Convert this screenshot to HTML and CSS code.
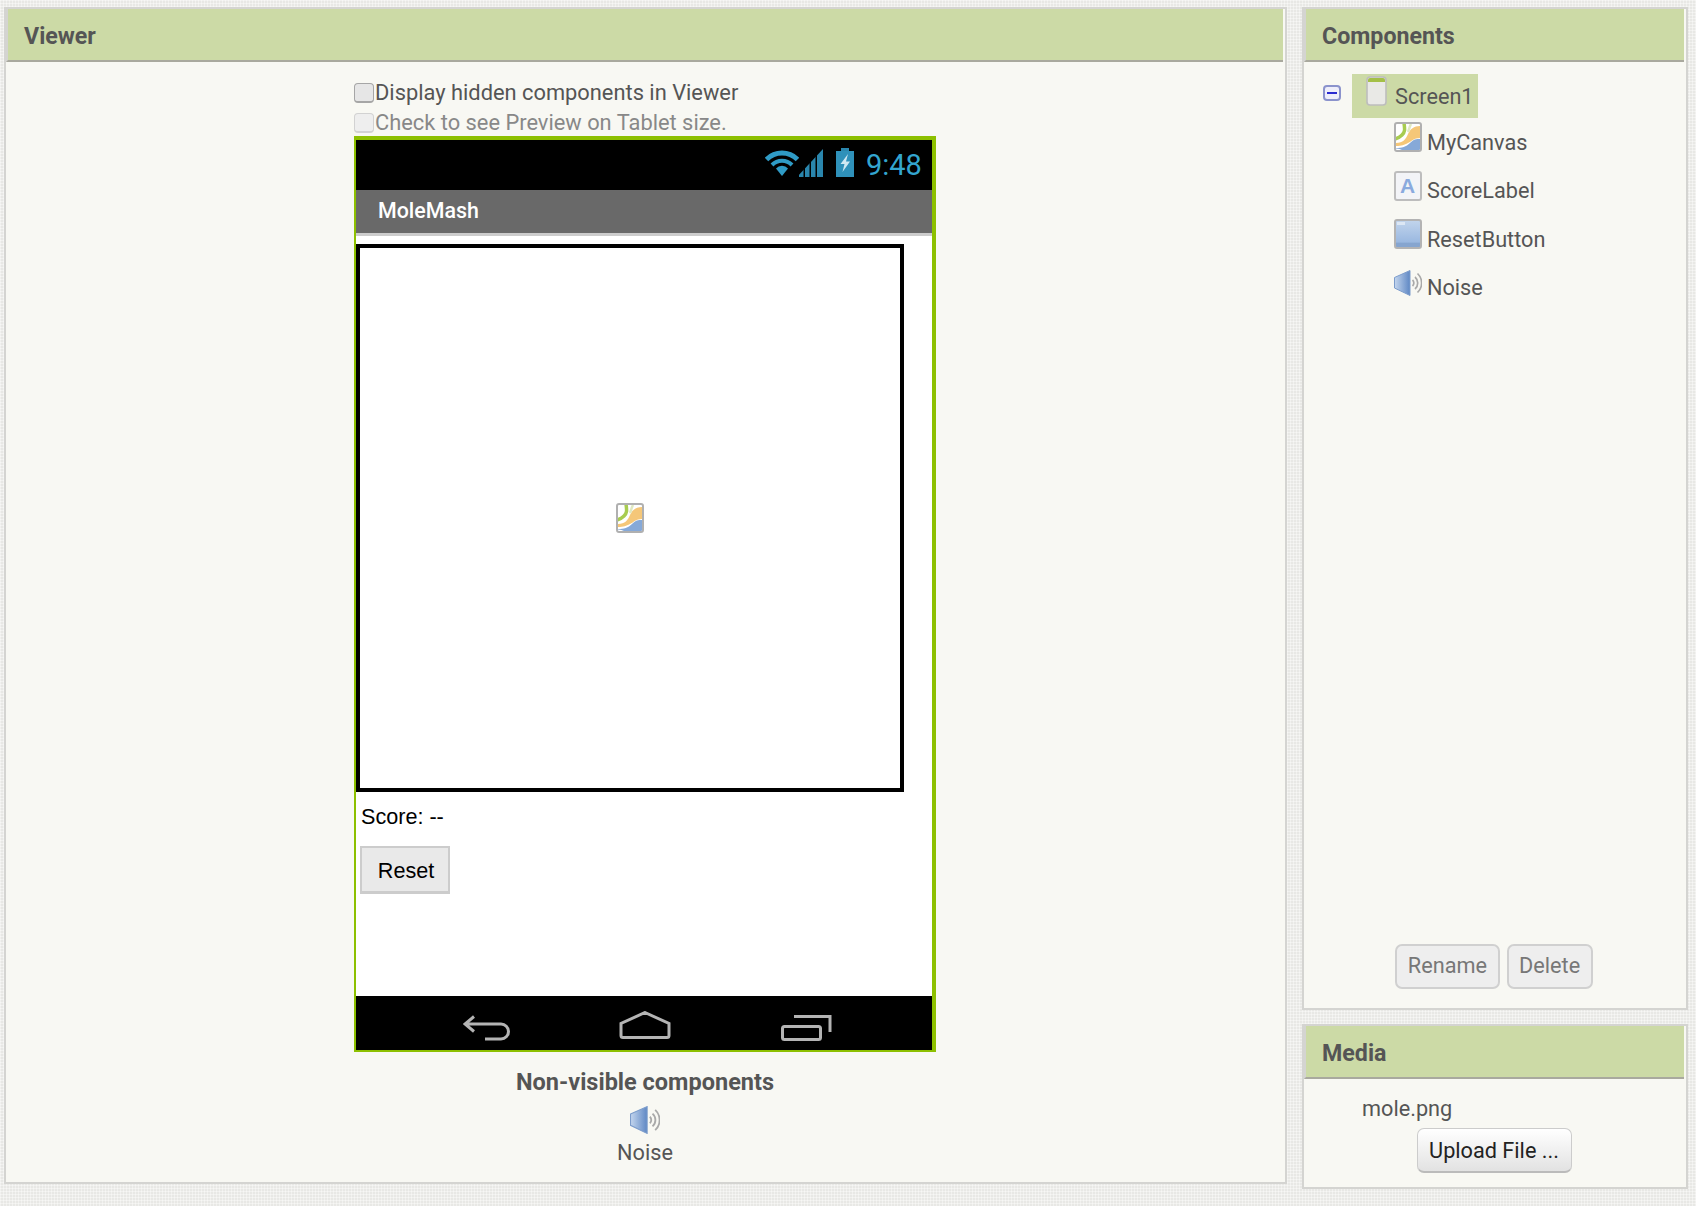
FILE: index.html
```html
<!DOCTYPE html>
<html lang="en">
<head>
<meta charset="utf-8">
<title>MoleMash Designer</title>
<link rel="stylesheet" href="styles.css">
</head>
<body>
<svg class="defs" width="0" height="0" aria-hidden="true">
  <defs>
    <linearGradient id="btnFill" x1="0" y1="0" x2="0" y2="1"><stop offset="0" stop-color="#c2d5ec"/><stop offset="0.8" stop-color="#9ab8e0"/><stop offset="0.81" stop-color="#86a5cf"/><stop offset="1" stop-color="#86a5cf"/></linearGradient>
    <linearGradient id="coneFill" x1="0" y1="0" x2="1" y2="0"><stop offset="0" stop-color="#c4d6ee"/><stop offset="1" stop-color="#5f88c4"/></linearGradient>
    <clipPath id="canvasClip"><rect x="2" y="2" width="24" height="26" rx="1"/></clipPath>
    <clipPath id="signalClip"><polygon points="0,28 26,0 26,28"/></clipPath>
    <symbol id="canvasIcon" viewBox="0 0 28 30">
      <rect x="1" y="1" width="26" height="28" rx="2" fill="#fff" stroke="#b0b0b0" stroke-width="2"/>
      <g clip-path="url(#canvasClip)">
        <path d="M2 21C9 21 12 17 14 12S20 4 26 4V16C20 16 18 19 14 21S8 24 2 24Z" fill="#f5c778"/>
        <path d="M2 26C8 26 12 25 16 21S22 17 26 17V28H2Z" fill="#86a9d8"/>
        <path d="M2 28V26.500C5 27 6 27 8 28Z" fill="#fff"/>
        <path d="M10 1C11 8 11 10 8 13C6 15 4 16 1 17" fill="none" stroke="#a8cc50" stroke-width="3.500"/>
        <path d="M17 2C15 6 15 8 14 10" fill="none" stroke="#dfe9c2" stroke-width="2.500"/>
      </g>
    </symbol>
    <symbol id="speakerIcon" viewBox="0 0 28 26">
      <path d="M.5 7.500 16 .5V25.500L.5 18Z" fill="url(#coneFill)" stroke="#7c9ccb" stroke-width="1"/>
      <g fill="none" stroke="#a9a9a9" stroke-width="1.700">
        <path d="M18.500 10a4 4 0 0 1 0 6"/>
        <path d="M21 7a8 8 0 0 1 0 12"/>
        <path d="M23.500 3.500a13 13 0 0 1 0 19"/>
      </g>
    </symbol>
  </defs>
</svg>
<main class="workspace">
  <section class="panel viewer">
    <h2 class="panel-title">Viewer</h2>
    <div class="viewer-body">
      <div class="viewer-column">
        <label class="option"><input class="check" type="checkbox">Display hidden components in Viewer</label>
        <label class="option option-off"><input class="check" type="checkbox" disabled>Check to see Preview on Tablet size.</label>
        <div class="phone">
          <div class="status-bar">
            <svg class="icon-wifi" viewBox="0 0 34 26"><g fill="none" stroke="#2f9bc6"><path d="M1.500 9.500a22 22 0 0 1 31 0" stroke-width="5"/><path d="M7 15a14 14 0 0 1 20 0" stroke-width="4"/></g><path d="M11 18.500a8 8 0 0 1 12 0L17 26Z" fill="#2f9bc6"/></svg>
            <svg class="icon-signal" viewBox="0 0 26 28"><g clip-path="url(#signalClip)" fill="#2a86ad"><rect x="2" y="0" width="4.500" height="28"/><rect x="8" y="0" width="4.500" height="28"/><rect x="14" y="0" width="4.500" height="28"/><rect x="20" y="0" width="6" height="28"/></g></svg>
            <svg class="icon-battery" viewBox="0 0 18 29"><rect x="5" y="0" width="8" height="3" fill="#2a86ad"/><rect x="0" y="3" width="18" height="26" fill="#2f91ba"/><path d="M12 6 4.500 16H8.500L6.500 24 14 13.500H10Z" fill="#cfe8f2"/></svg>
            <span class="clock">9:48</span>
          </div>
          <div class="title-bar">MoleMash</div>
          <div class="form">
            <div class="canvas"><svg class="canvas-mark"><use href="#canvasIcon"/></svg></div>
            <div class="score">Score: --</div>
            <button class="reset" type="button">Reset</button>
          </div>
          <div class="nav-bar">
            <svg class="nav-back" viewBox="0 0 48 26"><path d="M11 1.500 2 9l9 7.500M2 9h36a7.500 7.500 0 0 1 0 15H22"/></svg>
            <svg class="nav-home" viewBox="0 0 52 28"><path d="M26 1.500 50 12.500V24.500a2 2 0 0 1-2 2H4a2 2 0 0 1-2-2V12.500Z"/></svg>
            <svg class="nav-recent" viewBox="0 0 51 26"><rect x="1.500" y="11.500" width="38" height="13" rx="2"/><path d="M13 1.500H49V17"/></svg>
          </div>
        </div>
        <div class="non-visible">
          <h3 class="non-visible-title">Non-visible components</h3>
          <svg class="non-visible-icon"><use href="#speakerIcon"/></svg>
          <div class="non-visible-name">Noise</div>
        </div>
      </div>
    </div>
  </section>
  <div class="side">
    <section class="panel components">
      <h2 class="panel-title">Components</h2>
      <div class="tree">
        <div class="tree-root">
          <svg class="toggle" viewBox="0 0 18 16"><rect x="1" y="1" width="16" height="14" rx="3" fill="#eeeefa" stroke="#8b93cc" stroke-width="2"/><rect x="4" y="7" width="10" height="2" fill="#2a2ad0"/></svg>
          <div class="tree-selected">
            <svg class="screen-icon" viewBox="0 0 21 30"><rect x="1" y="1" width="19" height="28" rx="3" fill="#e9e9e6" stroke="#bdbdbd" stroke-width="1.600"/><path d="M2 5V4a2 2 0 0 1 2-2H17a2 2 0 0 1 2 2V6H2Z" fill="#a4c048"/></svg>
            <span class="tree-root-name">Screen1</span>
          </div>
        </div>
        <div class="tree-item"><svg class="item-icon"><use href="#canvasIcon"/></svg><span class="item-name">MyCanvas</span></div>
        <div class="tree-item"><svg class="item-icon" viewBox="0 0 28 30"><rect x="1" y="1" width="26" height="28" rx="2" fill="#f3f4f7" stroke="#bdbdbd" stroke-width="2"/><text class="label-glyph" x="13.500" y="22" text-anchor="middle">A</text></svg><span class="item-name">ScoreLabel</span></div>
        <div class="tree-item"><svg class="item-icon" viewBox="0 0 28 30"><rect x="1" y="1" width="26" height="28" rx="2" fill="url(#btnFill)" stroke="#b3b3b3" stroke-width="2"/><rect x="3" y="3" width="8" height="3" fill="#dce7f4"/></svg><span class="item-name">ResetButton</span></div>
        <div class="tree-item"><svg class="item-icon"><use href="#speakerIcon" y="2" height="26"/></svg><span class="item-name">Noise</span></div>
      </div>
      <div class="tree-actions">
        <button class="action" type="button">Rename</button>
        <button class="action" type="button">Delete</button>
      </div>
    </section>
    <section class="panel media">
      <h2 class="panel-title">Media</h2>
      <div class="media-file">mole.png</div>
      <div class="media-actions"><button class="upload" type="button">Upload File ...</button></div>
    </section>
  </div>
</main>
</body>
</html>
```
FILE: styles.css
```css
* { box-sizing: border-box; }
html, body { height: 100%; }
body {
  margin: 0;
  overflow: hidden;
  font-family: Roboto, "Liberation Sans", sans-serif;
  font-size: 21.7px;
  color: #555;
  background-color: #e8e8e5;
  background-image:
    linear-gradient(rgba(255,255,255,.4) 1px, transparent 1px),
    linear-gradient(90deg, rgba(255,255,255,.4) 1px, transparent 1px);
  background-size: 3px 3px;
}
.defs { position: absolute; }
.workspace {
  display: flex;
  gap: 15px;
  padding: 7px 8px 0 4px;
  align-items: flex-start;
}
.panel {
  display: flex;
  flex-direction: column;
  background: #f8f8f3;
  border: 2px solid #d4d4d1;
}
.panel-title {
  margin: 0 2px 0 0;
  height: 53px;
  padding: 4px 0 0 16px;
  line-height: 47px;
  font-size: 23.2px;
  font-weight: 700;
  color: #555;
  background: #ccdaa6;
  border-left: 2px solid #d4d4d1;
  border-bottom: 2px solid #a9a99e;
}
.viewer { width: 1283px; height: 1177px; }
.viewer-body { display: flex; flex: 1; justify-content: center; padding-right: 1px; }
.viewer-column { width: 582px; display: flex; flex-direction: column; padding-top: 17px; }
.option { display: flex; align-items: center; height: 29px; padding-bottom: 2px; font-size: 21.85px; line-height: 27px; white-space: nowrap; }
.option-off { height: 28px; padding: 1px 0 0; color: #888; }
.check {
  appearance: none;
  flex: none;
  width: 20px;
  height: 20px;
  margin: 0 1px 0 0;
  background: #e6e6e6;
  border: 1px solid #a6a6a6;
  border-bottom-width: 2px;
  border-radius: 4px;
}
.check:disabled { background: #eee; border-color: #d2d2d2; }
.phone {
  display: flex;
  flex-direction: column;
  height: 916px;
  background: #fff;
  border: solid #8dc000;
  border-width: 4px 4px 2px 2px;
}
.status-bar {
  display: flex;
  align-items: flex-start;
  height: 50px;
  background: #000;
  padding: 8px 0 0 409px;
}
.icon-wifi { width: 34px; height: 26px; margin: 2px -2px 0 0; }
.icon-signal { width: 26px; height: 28px; margin-top: 1px; }
.icon-battery { width: 18px; height: 29px; margin-left: 13px; }
.clock { margin-left: 12px; font-size: 29px; line-height: 34px; color: #33a5cf; font-weight: 400; }
.title-bar {
  height: 46px;
  padding-left: 22px;
  line-height: 41px;
  font-size: 21.4px;
  font-weight: 500;
  color: #fff;
  background: #696969;
  border-bottom: 3px solid #ccc;
}
.form { flex: 1; padding-top: 8px; font-family: "Liberation Sans", Arial, sans-serif; font-size: 21.6px; color: #000; }
.canvas {
  display: flex;
  align-items: center;
  justify-content: center;
  width: 548px;
  height: 548px;
  border: 4px solid #000;
}
.canvas-mark { width: 28px; height: 30px; }
.score { margin: 12px 0 0 5px; height: 42px; line-height: 25px; }
.reset {
  display: block;
  width: 90px;
  height: 48px;
  margin-left: 4px;
  padding: 2px 0 0 2px;
  font: inherit;
  color: #000;
  background: #e9e9e9;
  border: 2px solid #ccc;
  border-bottom-width: 3px;
}
.nav-bar { position: relative; height: 54px; background: #000; }
.nav-bar svg { position: absolute; fill: none; stroke: #b4b4b4; stroke-width: 3; }
.nav-back { left: 107px; top: 19px; width: 48px; height: 26px; }
.nav-home { left: 263px; top: 15px; width: 52px; height: 28px; }
.nav-recent { left: 425px; top: 19px; width: 51px; height: 26px; }
.non-visible { display: flex; flex-direction: column; align-items: center; padding-top: 18px; }
.non-visible-title { margin: 0; height: 36px; line-height: 24px; font-size: 23.5px; font-weight: 700; color: #555; }
.non-visible-icon { width: 30px; height: 28px; }
.non-visible-name { margin-top: 6px; line-height: 26px; }
.side { display: flex; flex-direction: column; gap: 14px; width: 386px; }
.components { height: 1003px; }
.tree { flex: 1; padding: 10px 0 0 19px; }
.tree-root { display: flex; align-items: flex-start; height: 50px; }
.toggle { width: 18px; height: 16px; margin: 13px 11px 0 0; }
.tree-selected { display: flex; align-items: flex-start; width: 126px; height: 44px; margin-top: 2px; padding: 2px 0 0 14px; background: #ccdaa6; }
.screen-icon { width: 21px; height: 30px; }
.tree-root-name { margin: 8px 0 0 8px; line-height: 26px; }
.tree-item { display: flex; height: 48.5px; margin-left: 71px; }
.item-icon { width: 28px; height: 30px; flex: none; }
.item-name { margin: 5.5px 0 0 5px; line-height: 30px; }
.label-glyph { font-family: "Liberation Sans", sans-serif; font-weight: 700; font-size: 21px; fill: #8aaade; }
.tree-actions { display: flex; justify-content: center; gap: 7px; padding: 0 0 19px 0; margin-left: -2px; }
.action {
  height: 45px;
  padding: 0 10.5px 3px;
  font: inherit;
  color: #777;
  background: #eee;
  border: 2px solid #d0d0d0;
  border-radius: 7px;
}
.media { height: 165px; }
.media-file { margin: 17px 0 0 58px; line-height: 26px; }
.media-actions { display: flex; justify-content: center; margin: 6px 0 0 -2px; }
.upload {
  height: 45px;
  width: 155px;
  padding: 0;
  font: inherit;
  color: #222;
  background: linear-gradient(#fff, #e2e2e2);
  border: 1px solid #ccc;
  border-bottom: 2px solid #bbb;
  border-radius: 7px;
}
```
